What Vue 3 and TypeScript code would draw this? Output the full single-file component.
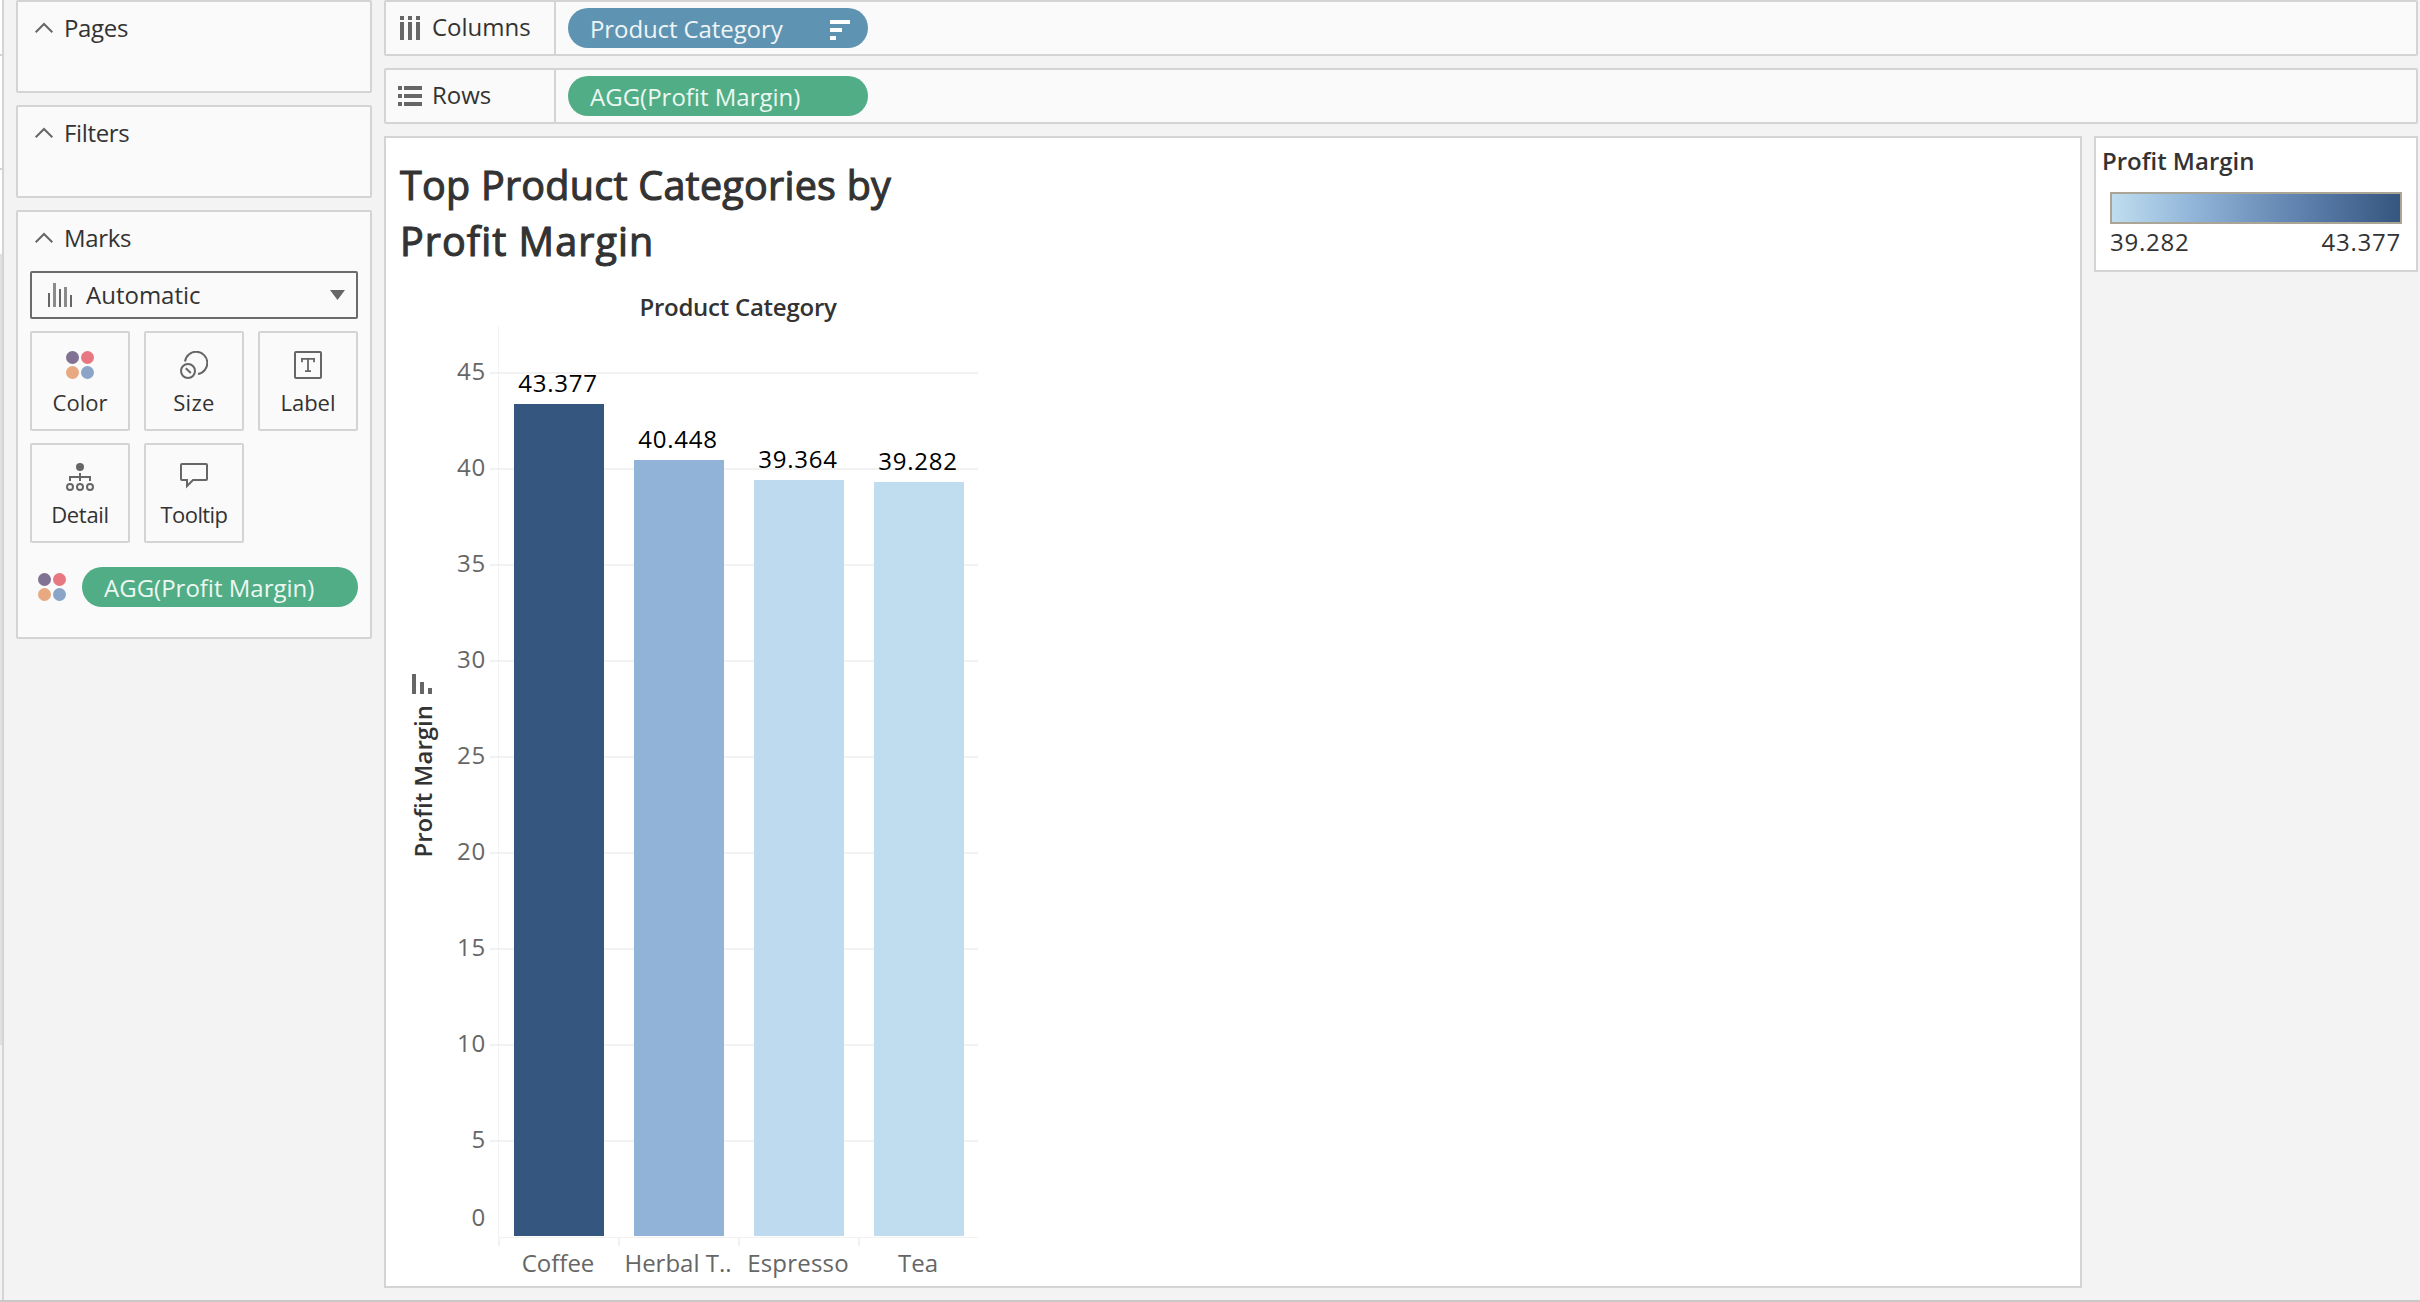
<script setup lang="ts">
interface MarkButton { id: string; label: string }
interface Bar { name: string; value: string; height: number; color: string }

const shelves = [
  { id: 'columns', label: 'Columns', field: 'Product Category', sorted: true, kind: 'blue' },
  { id: 'rows', label: 'Rows', field: 'AGG(Profit Margin)', sorted: false, kind: 'green' },
]
const emptyCards: string[] = ['Pages', 'Filters']
const markButtons: MarkButton[] = [
  { id: 'color', label: 'Color' },
  { id: 'size', label: 'Size' },
  { id: 'label', label: 'Label' },
  { id: 'detail', label: 'Detail' },
  { id: 'tooltip', label: 'Tooltip' },
]
const bars: Bar[] = [
  { name: 'Coffee', value: '43.377', height: 832, color: '#35567e' },
  { name: 'Herbal T..', value: '40.448', height: 776, color: '#90b3d7' },
  { name: 'Espresso', value: '39.364', height: 756, color: '#bddaef' },
  { name: 'Tea', value: '39.282', height: 754, color: '#bfddef' },
]
const ticks: number[] = [45, 40, 35, 30, 25, 20, 15, 10, 5, 0]
</script>

<template>
  <div class="app">
    <div class="edge"><i></i><i></i><i></i><i></i></div>
    <aside class="side">
      <section v-for="c in emptyCards" :key="c" class="card">
        <header class="head">
          <svg width="18" height="12" viewBox="0 0 18 12"><path d="M0.7 10.3 L9 2 L17.3 10.3" fill="none" stroke="#666" stroke-width="2" /></svg>
          <span>{{ c }}</span>
        </header>
      </section>
      <section class="card marks">
        <header class="head">
          <svg width="18" height="12" viewBox="0 0 18 12"><path d="M0.7 10.3 L9 2 L17.3 10.3" fill="none" stroke="#666" stroke-width="2" /></svg>
          <span>Marks</span>
        </header>
        <div class="select">
          <svg width="24" height="24" viewBox="0 0 24 24" fill="#666"><path d="M0 10h2v14H0zM11 6h2v18h-2zM22 12h2v12h-2z" /><path d="M5 0h3v24H5zM16 4h3v20h-3z" fill="#8b8b8b" /></svg>
          <span>Automatic</span>
          <svg class="caret" width="15" height="10" viewBox="0 0 15 10"><path d="M0 0h15L7.5 10z" fill="#666" /></svg>
        </div>
        <div class="grid">
          <div v-for="b in markButtons" :key="b.id" class="mark" :class="b.id">
            <svg width="28" height="28" viewBox="0 0 28 28" fill="none" stroke="#666" stroke-width="2">
              <g v-if="b.id === 'color'" stroke="none">
                <circle cx="6.5" cy="6.5" r="6.5" fill="#817193" /><circle cx="21.5" cy="6.5" r="6.5" fill="#e77881" />
                <circle cx="6.5" cy="21.5" r="6.5" fill="#e8a982" /><circle cx="21.5" cy="21.5" r="6.5" fill="#8aa5c8" />
              </g>
              <g v-else-if="b.id === 'size'">
                <path d="M5 10.5 A11.2 11.2 0 1 1 18 23" /><circle cx="8" cy="20" r="7" /><path d="M5.8 17.2 L10.8 22" />
              </g>
              <g v-else-if="b.id === 'label'">
                <rect x="1" y="1" width="26" height="26" rx="1" />
                <path d="M7 7.9h14M14 8v12.2M11 20.2h6M8 8v3.2M20 8v3.2" stroke-width="1.8" />
              </g>
              <g v-else-if="b.id === 'detail'">
                <circle cx="14" cy="4" r="4" fill="#666" stroke="none" /><path d="M14 10v8M4 18v-4h20v4" />
                <circle cx="4" cy="24" r="3" /><circle cx="14" cy="24" r="3" /><circle cx="24" cy="24" r="3" />
              </g>
              <path v-else d="M2 1h24q1 0 1 1v14q0 1 -1 1h-13l-6 6v-6h-5q-1 0 -1 -1v-14q0-1 1-1z" />
            </svg>
            <span>{{ b.label }}</span>
          </div>
        </div>
        <div class="encoding">
          <svg width="28" height="28" viewBox="0 0 28 28">
            <circle cx="6.5" cy="6.5" r="6.5" fill="#817193" /><circle cx="21.5" cy="6.5" r="6.5" fill="#e77881" />
            <circle cx="6.5" cy="21.5" r="6.5" fill="#e8a982" /><circle cx="21.5" cy="21.5" r="6.5" fill="#8aa5c8" />
          </svg>
          <div class="pill green"><span>AGG(Profit Margin)</span></div>
        </div>
      </section>
    </aside>
    <main class="main">
      <div v-for="s in shelves" :key="s.id" class="shelf">
        <div class="shelf-label" :class="s.id">
          <svg v-if="s.id === 'columns'" width="24" height="24" viewBox="0 0 24 24" fill="#666"><path d="M2 0h4v4h-4zM10 0h4v4h-4zM18 0h4v4h-4zM2 6h4v18h-4zM10 6h4v18h-4zM18 6h4v18h-4z" /></svg>
          <svg v-else width="24" height="24" viewBox="0 0 24 24" fill="#666"><path d="M0 2h4v4H0zM0 10h4v4H0zM0 18h4v4H0zM6 2h18v4H6zM6 10h18v4H6zM6 18h18v4H6z" /></svg>
          <span>{{ s.label }}</span>
        </div>
        <div class="pill" :class="s.kind">
          <span>{{ s.field }}</span>
          <svg v-if="s.sorted" width="20" height="20" viewBox="0 0 20 20" fill="#fff"><path d="M0 0h20v4H0zM0 8h12v4H0zM0 16h6v4H0z" /></svg>
        </div>
      </div>
      <div class="content">
        <section class="view">
          <h1>Top Product Categories by<br /><span>Profit Margin</span></h1>
          <div class="chart">
            <div class="y-title">
              <svg width="20" height="20" viewBox="0 0 20 20" fill="#666"><path d="M0 0h4v20H0zM8 8h4v12H8zM16 14h4v6h-4z" /></svg>
              <span>Profit Margin</span>
            </div>
            <div class="y-axis"><div v-for="t in ticks" :key="t"><span>{{ t }}</span></div></div>
            <div class="plot">
              <div class="x-title">Product Category</div>
              <svg class="lines" width="490" height="922" viewBox="0 0 490 922">
                <path d="M0 47H488M0 143H488M0 239H488M0 335H488M0 431H488M0 527H488M0 623H488M0 719H488M0 815H488" stroke="#f2f2f2" stroke-width="2" />
                <path d="M8.5 0V912M8 911.5H488" stroke="#f2f2f2" />
                <path d="M9 911v9M129 911v9M249 911v9M369 911v9" stroke="#f2f2f2" stroke-width="2" />
              </svg>
              <div class="bars">
                <div v-for="b in bars" :key="b.name" class="col">
                  <span class="val">{{ b.value }}</span>
                  <div class="bar" :style="{ height: b.height + 'px', background: b.color }"></div>
                </div>
              </div>
              <div class="names"><span v-for="b in bars" :key="b.name">{{ b.name }}</span></div>
            </div>
          </div>
        </section>
        <section class="legend">
          <h2>Profit Margin</h2>
          <div class="ramp"></div>
          <div class="range"><span>39.282</span><span>43.377</span></div>
        </section>
      </div>
    </main>
  </div>
</template>

<style>
body { margin: 0; background: #f3f3f3; }
</style>
<style scoped>
* { box-sizing: border-box; }
svg { display: block; flex: none; }
.app { width: 2420px; height: 1302px; display: flex; overflow: hidden; background: #f3f3f3; border-bottom: 2px solid #c8c8c8; font: 24px/30px "Open Sans", "Noto Sans", sans-serif; color: #333; white-space: nowrap; }
.edge { width: 4px; height: 1300px; border-right: 2px solid #d4d4d4; display: flex; flex-direction: column; background: #f3f3f3; }
.edge i { display: block; background: #fff; border-bottom: 2px solid #d4d4d4; height: 56px; }
.edge i:nth-child(2) { height: 114px; }
.edge i:nth-child(3) { height: 84px; border: 0; }
.edge i:nth-child(4) { height: 791px; border: 0; background: #e0e0e0; }
.side { width: 356px; margin-left: 12px; }
.card { height: 93px; margin-bottom: 12px; border: 2px solid #d4d4d4; border-radius: 2px; background: #fafafa; }
.head { display: flex; align-items: center; height: 30px; margin: 11px 0 0 17px; }
.head span { margin-left: 11px; letter-spacing: -.35px; }
.marks { height: 429px; padding: 0 12px; }
.marks .head { margin-left: 5px; }
.select { height: 48px; width: 328px; margin-top: 18px; border: 2px solid #6b6b6b; border-radius: 2px; display: flex; align-items: center; padding: 0 11px 0 16px; }
.select span { margin: 0 auto 0 14px; }
.grid { display: grid; grid-template-columns: 100px 100px 100px; gap: 12px 14px; margin-top: 12px; }
.mark { height: 100px; border: 2px solid #d4d4d4; border-radius: 2px; display: flex; flex-direction: column; align-items: center; padding-top: 18px; font-size: 22px; }
.mark span { margin-top: 8px; }
.detail span { letter-spacing: -.3px; }
.tooltip span { letter-spacing: -.6px; }
.size span { letter-spacing: .3px; }
.encoding { display: flex; align-items: center; margin: 24px 0 0 8px; }
.encoding .pill { width: 276px; margin-left: 16px; }
.pill { height: 40px; width: 300px; border-radius: 20px; color: #edf7f2; display: flex; align-items: center; justify-content: space-between; padding: 2px 18px 0 22px; }
.pill svg { margin-top: 2px; }
.green { background: #50ad85; }
.blue { background: #5e94b1; color: #eff4f7; letter-spacing: -.1px; }
.main { margin-left: 12px; width: 2034px; }
.shelf { height: 56px; margin-bottom: 12px; border: 2px solid #d4d4d4; border-radius: 2px; background: #fafafa; display: flex; align-items: center; }
.shelf-label { width: 170px; height: 52px; border-right: 2px solid #d4d4d4; display: flex; align-items: center; padding-left: 12px; margin-right: 12px; }
.shelf-label span { margin: -2px 0 0 10px; }
.content { display: flex; gap: 12px; align-items: flex-start; }
.view { width: 1698px; height: 1152px; border: 2px solid #d4d4d4; background: #fff; padding: 19px 0 0 14px; }
h1 { margin: 0 0 2px 0; font-size: 39.5px; line-height: 56px; font-weight: 400; letter-spacing: .25px; -webkit-text-stroke: 1.1px #333; }
h1 span { letter-spacing: 1.05px; }
.chart { display: flex; }
.y-title { width: 46px; padding: 403px 0 0 12px; font-weight: 600; }
.y-title span { display: block; writing-mode: vertical-rl; transform: rotate(180deg); margin: 11px 0 0 -4px; }
.y-axis { width: 40px; padding-top: 85px; color: #666; text-align: right; letter-spacing: .8px; }
.y-axis div { height: 96px; }
.y-axis div:last-child { margin-top: -18px; }
.plot { position: relative; margin-left: 4px; width: 490px; }
.x-title { width: 480px; margin-left: 8px; height: 55px; padding-top: 21px; text-align: center; font-weight: 600; letter-spacing: -.25px; }
.lines { position: absolute; left: 0; top: 55px; }
.bars { position: relative; height: 910px; margin-left: 9px; display: flex; }
.col { width: 120px; padding-right: 1px; display: flex; flex-direction: column; justify-content: flex-end; align-items: center; color: #000; }
.val { margin: 0 1px 6px 0; letter-spacing: .75px; }
.bar { width: 90px; }
.names { display: flex; margin: 12px 0 0 8px; color: #666; }
.names span { width: 120px; text-align: center; }
.names span:nth-child(3) { letter-spacing: .2px; }
.legend { width: 324px; height: 136px; border: 2px solid #d4d4d4; background: #fff; padding: 8px 14px 0; }
h2 { margin: 0 0 0 -8px; font-size: 24px; line-height: 30px; font-weight: 600; }
.ramp { height: 32px; margin-top: 16px; border: 2px solid #aaa595; background: linear-gradient(90deg, #bfddef, #93b7da 27%, #7699c1 48%, #5b7eab 68%, #35567e); }
.range { display: flex; justify-content: space-between; padding-right: 1px; margin-top: 3px; letter-spacing: .75px; }
</style>
